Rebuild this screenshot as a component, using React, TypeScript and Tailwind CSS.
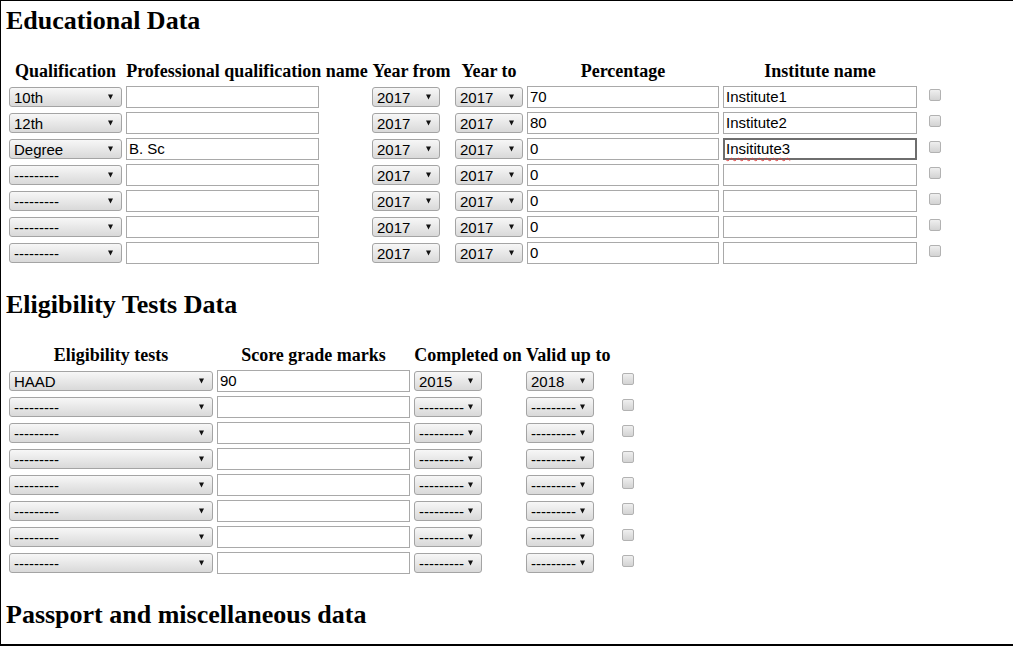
import React from "react";

const DASH = "---------";

function Arrow() {
  return (
    <svg width="5" height="6" viewBox="0 0 5 6" className="shrink-0">
      <polygon points="0,0.5 5,0.5 2.5,5.5" fill="#111" />
    </svg>
  );
}

function Dropdown({ value, w }: { value: string; w: string }) {
  return (
    <div
      className={`${w} h-[20px] flex items-center justify-between gap-[3px] pl-[4px] pr-[8px] border border-[#a4a4a4] rounded-[3px] bg-linear-to-b from-[#f7f7f7] to-[#d9d9d9] text-[15px] text-black font-['Liberation_Sans',Arial,sans-serif] leading-none overflow-hidden`}
    >
      <span className="whitespace-nowrap">{value}</span>
      <Arrow />
    </div>
  );
}

function TextBox({ value, w }: { value: string; w: string }) {
  return (
    <input
      readOnly
      value={value}
      className={`${w} h-[22px] block px-[2px] border border-[#a9a9a9] bg-white text-[15px] text-black font-['Liberation_Sans',Arial,sans-serif] outline-none`}
    />
  );
}

function Check() {
  return (
    <div className="ml-[8px] mb-[4px] w-[12px] h-[12px] rounded-[2px] border border-[#b2b2b2] bg-linear-to-b from-[#efefef] to-[#d3d3d3]" />
  );
}

const eduRows = [
  { qual: "10th", prof: "", pct: "70", inst: "Institute1" },
  { qual: "12th", prof: "", pct: "80", inst: "Institute2" },
  { qual: "Degree", prof: "B. Sc", pct: "0", inst: "Insititute3", focused: true },
  { qual: DASH, prof: "", pct: "0", inst: "" },
  { qual: DASH, prof: "", pct: "0", inst: "" },
  { qual: DASH, prof: "", pct: "0", inst: "" },
  { qual: DASH, prof: "", pct: "0", inst: "" },
];

const testRows = [
  { test: "HAAD", score: "90", done: "2015", valid: "2018" },
  ...Array.from({ length: 7 }, () => ({ test: DASH, score: "", done: DASH, valid: DASH })),
];

const th = "p-[1px] text-[18px] leading-[21px] font-bold text-center whitespace-nowrap";
const td = "p-[1px]";

export default function App() {
  return (
    <div className="h-[646px] overflow-hidden bg-white border-t border-l border-b-2 border-black pt-[6px] pl-[5px] font-['Liberation_Serif','Times_New_Roman',serif] text-black">
      <h2 className="text-[26px] leading-[28px] font-bold">Educational Data</h2>

      <table className="mt-[23px] border-separate border-spacing-[2px]">
        <thead>
          <tr>
            <th className={`${th} w-[115px]`}>Qualification</th>
            <th className={`${th} w-[244px]`}>Professional qualification name</th>
            <th className={`${th} w-[81px]`}>Year from</th>
            <th className={`${th} w-[70px]`}>Year to</th>
            <th className={`${th} w-[194px]`}>Percentage</th>
            <th className={`${th} w-[196px]`}>Institute name</th>
            <th className={`${th} w-[26px]`}></th>
          </tr>
        </thead>
        <tbody>
          {eduRows.map((r, i) => (
            <tr key={i}>
              <td className={td}>
                <Dropdown value={r.qual} w="w-[113px]" />
              </td>
              <td className={td}>
                <TextBox value={r.prof} w="w-[193px]" />
              </td>
              <td className={td}>
                <Dropdown value="2017" w="w-[68px]" />
              </td>
              <td className={td}>
                <Dropdown value="2017" w="w-[68px]" />
              </td>
              <td className={td}>
                <TextBox value={r.pct} w="w-[192px]" />
              </td>
              <td className={td}>
                {r.focused ? (
                  <div className="w-[194px] h-[22px] flex items-center px-[1px] border-2 border-[#6e6e6e] bg-white text-[15px] font-['Liberation_Sans',Arial,sans-serif]">
                    <span className="underline decoration-wavy decoration-[#e04040] decoration-1 underline-offset-[3px]">
                      {r.inst}
                    </span>
                  </div>
                ) : (
                  <TextBox value={r.inst} w="w-[194px]" />
                )}
              </td>
              <td className={td}>
                <Check />
              </td>
            </tr>
          ))}
        </tbody>
      </table>

      <h2 className="mt-[24px] text-[26px] leading-[28px] font-bold">Eligibility Tests Data</h2>

      <table className="mt-[23px] border-separate border-spacing-[2px]">
        <thead>
          <tr>
            <th className={`${th} w-[206px]`}>Eligibility tests</th>
            <th className={`${th} w-[195px]`}>Score grade marks</th>
            <th className={`${th} w-[110px]`}>Completed on</th>
            <th className={`${th} w-[86px]`}>Valid up to</th>
            <th className={`${th} w-[26px]`}></th>
          </tr>
        </thead>
        <tbody>
          {testRows.map((r, i) => (
            <tr key={i}>
              <td className={td}>
                <Dropdown value={r.test} w="w-[204px]" />
              </td>
              <td className={td}>
                <TextBox value={r.score} w="w-[193px]" />
              </td>
              <td className={td}>
                <Dropdown value={r.done} w="w-[68px]" />
              </td>
              <td className={td}>
                <Dropdown value={r.valid} w="w-[68px]" />
              </td>
              <td className={td}>
                <Check />
              </td>
            </tr>
          ))}
        </tbody>
      </table>

      <h2 className="mt-[24px] text-[26px] leading-[28px] font-bold">Passport and miscellaneous data</h2>
    </div>
  );
}
